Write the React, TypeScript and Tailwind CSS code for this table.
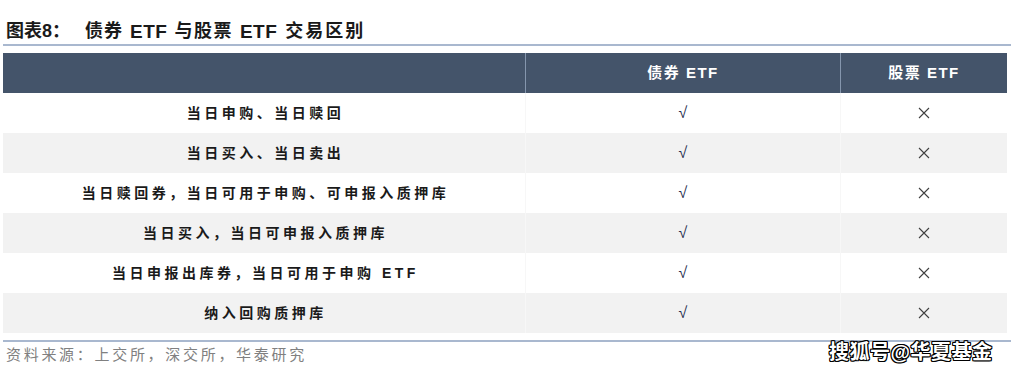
import React from "react";

const rows = [
  "当日申购、当日赎回",
  "当日买入、当日卖出",
  "当日赎回券，当日可用于申购、可申报入质押库",
  "当日买入，当日可申报入质押库",
  "当日申报出库券，当日可用于申购 ETF",
  "纳入回购质押库",
];

function Cross() {
  return (
    <svg width="12" height="12" viewBox="0 0 12 12" className="block">
      <path d="M1 1 L11 11 M11 1 L1 11" stroke="#404040" strokeWidth="1.1" fill="none" />
    </svg>
  );
}

export default function App() {
  return (
    <div className="relative w-[1017px] h-[375px] bg-white overflow-hidden font-['Liberation_Sans','Noto_Sans_CJK_SC',sans-serif]">
      <div className="h-[44px] pt-[18px] pl-[6px] flex items-center text-[18px] font-bold text-[#1a1a1a] leading-none whitespace-nowrap">
        <span className="tracking-[0px]">图表8：</span>
        <span className="ml-[15px] tracking-[1px]">债券</span>
        <span className="ml-[7px] text-[19px] tracking-[0.5px]">ETF</span>
        <span className="ml-[7px] tracking-[1.5px]">与股票</span>
        <span className="ml-[7px] text-[19px] tracking-[0.5px]">ETF</span>
        <span className="ml-[8px] tracking-[2px]">交易区别</span>
      </div>
      <div className="ml-[3px] w-[1008px] h-[2px] bg-[#a9b8cf]" />
      <div className="ml-[3px] mt-[7px] w-[1004px]">
        <div className="grid grid-cols-[522px_315px_167px] h-[40px] bg-[#44546a] text-white text-[15px] font-bold">
          <div />
          <div className="border-l border-[#8596ad] flex items-center justify-center tracking-[1.5px]">债券 ETF</div>
          <div className="border-l border-[#8596ad] flex items-center justify-center tracking-[1.5px]">股票 ETF</div>
        </div>
        {rows.map((r, i) => (
          <div
            key={i}
            className={
              "grid grid-cols-[522px_315px_167px] h-[40px] " +
              (i % 2 === 1 ? "bg-[#f2f2f2]" : "bg-white")
            }
          >
            <div className="flex items-center justify-center text-[14px] font-bold text-[#1a1a1a] tracking-[3.5px] pl-[3px]">
              {r}
            </div>
            <div className="border-l border-[#f7f7f7] flex items-center justify-center text-[16px] text-[#1f2f4f]">√</div>
            <div className="border-l border-[#f7f7f7] flex items-center justify-center">
              <Cross />
            </div>
          </div>
        ))}
      </div>
      <div className="ml-[3px] mt-[7px] w-[1008px] h-[2px] bg-[#a9b8cf]" />
      <div className="h-[26px] pl-[6px] flex items-center text-[15px] text-[#808080] tracking-[2.7px]">
        资料来源：上交所，深交所，华泰研究
      </div>
      <div className="absolute left-[829px] top-[340px] text-[20px] font-bold text-white tracking-[0.5px] leading-[24px] [text-shadow:1px_1px_0_#000,-1px_-1px_0_#000,1px_-1px_0_#000,-1px_1px_0_#000,0_1px_0_#000,0_-1px_0_#000,1px_0_0_#000,-1px_0_0_#000]">
        搜狐号@华夏基金
      </div>
    </div>
  );
}
